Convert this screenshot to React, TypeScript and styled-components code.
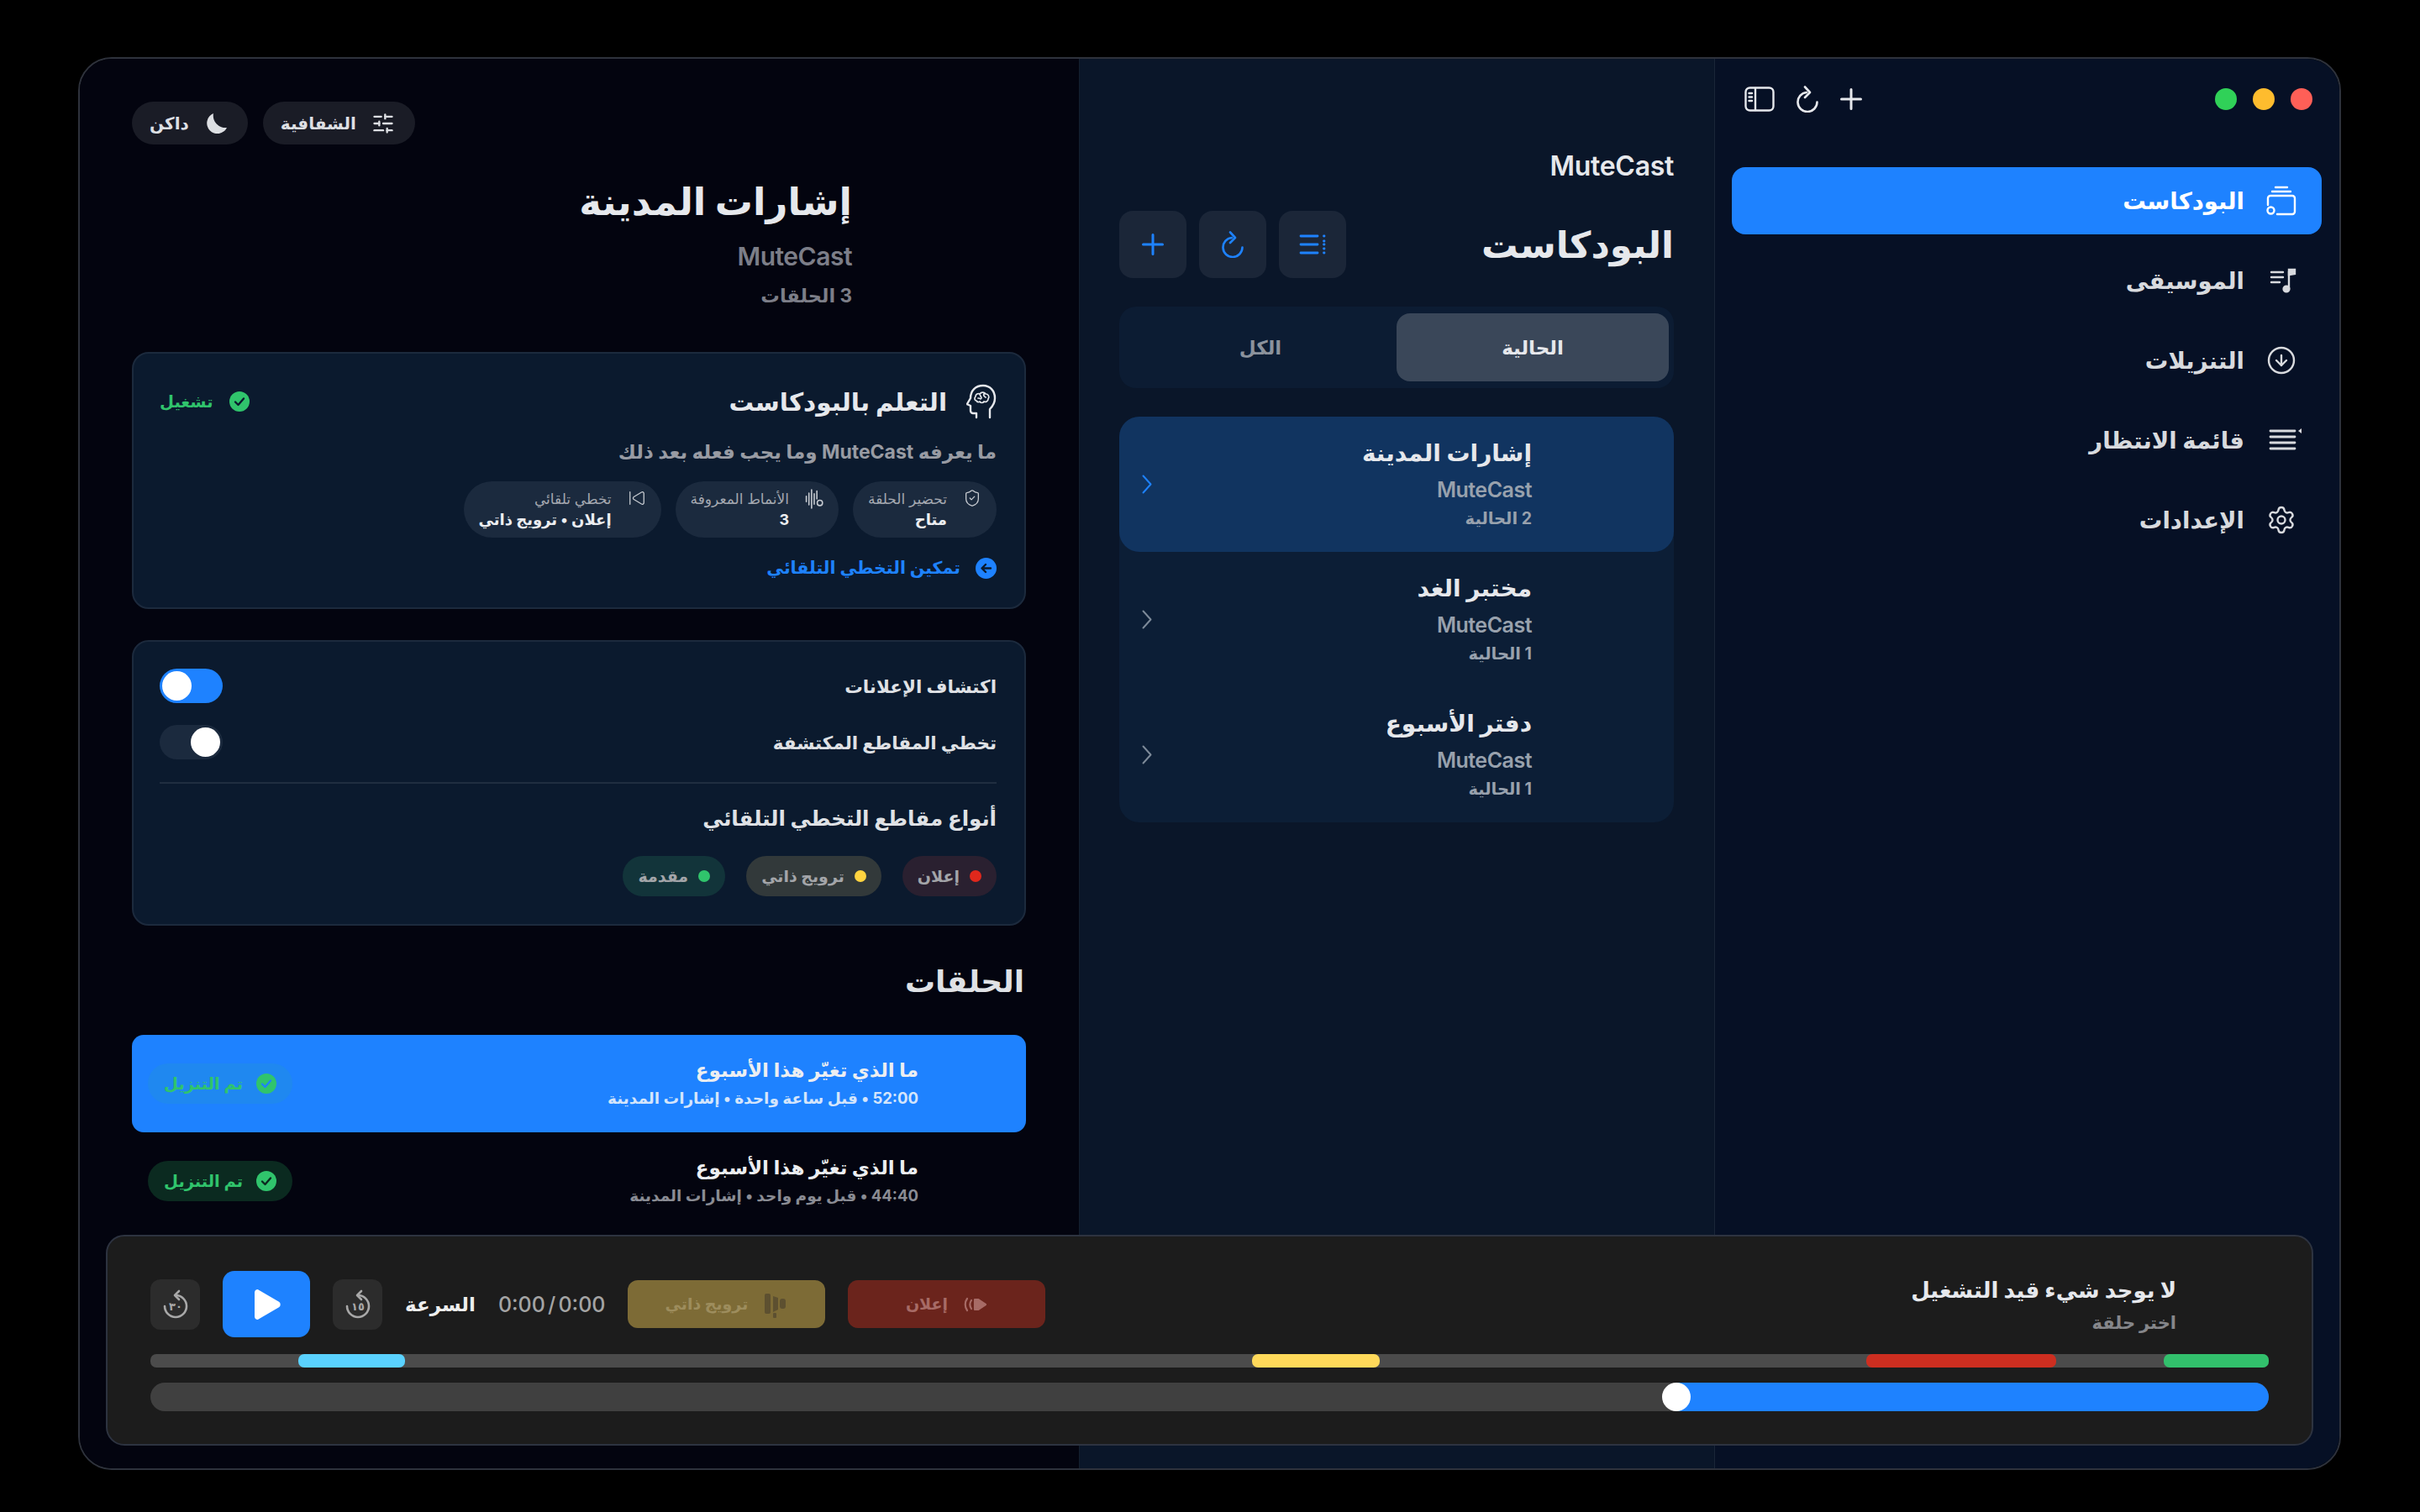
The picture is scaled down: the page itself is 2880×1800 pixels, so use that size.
import React from 'react';
import styled, { createGlobalStyle } from 'styled-components';
import {
  CircleArrowDown,
  Settings,
  ShieldCheck,
  SkipBack,
  SlidersHorizontal,
} from 'lucide-react';

const GlobalStyle = createGlobalStyle`
  * { box-sizing: border-box; }
  html, body { margin: 0; background: #000; }
  body { font-family: Inter, "DejaVu Sans", sans-serif; }
`;

/* icons */
const SidebarIcon = () => (
  <svg width="36" height="30" viewBox="0 0 36 30" fill="none" stroke="#e6e8ec" strokeWidth="2.4" strokeLinecap="round">
    <rect x="1.5" y="1.5" width="33" height="27" rx="5" />
    <path d="M13 2v26M5.5 8h3.5M5.5 12.5h3.5M5.5 17h3.5" />
  </svg>
);

const RefreshIcon = ({ color = '#e6e8ec' }: { color?: string }) => (
  <svg width="28" height="32" viewBox="0 0 28 32" fill="none" stroke={color} strokeWidth="2.6" strokeLinecap="round" strokeLinejoin="round">
    <path d="M13 8A11.5 11.5 0 1 0 25.500 19.500" />
    <path d="M11 1.500l6 6.500-6 6" />
  </svg>
);

const PlusIcon = ({ color }: { color: string }) => (
  <svg width="26" height="26" viewBox="0 0 26 26" fill="none" stroke={color} strokeWidth="3" strokeLinecap="round">
    <path d="M13 1.500v23M1.500 13h23" />
  </svg>
);

const PodcastIcon = () => (
  <svg width="38" height="36" viewBox="0 0 38 36" fill="none" stroke="currentColor" strokeWidth="2.4" strokeLinecap="round">
    <path d="M13 2h14M9 7h22" />
    <path d="M4 23V15a3 3 0 0 1 3-3h26a3 3 0 0 1 3 3v16a3 3 0 0 1-3 3H15" />
    <circle cx="7.500" cy="29.500" r="4" />
  </svg>
);

const MusicIcon = () => (
  <svg width="32" height="32" viewBox="0 0 32 32" fill="none" stroke="currentColor" strokeWidth="2.4" strokeLinecap="round">
    <path d="M2 6h14M2 12h14M2 18h10" />
    <path d="M23 5v21" />
    <path d="M23 3h7v5l-7 1z" fill="currentColor" />
    <circle cx="20" cy="26" r="3.400" fill="currentColor" />
  </svg>
);

const QueueIcon = () => (
  <QueueSvg width="34" height="30" viewBox="0 0 34 30" fill="none" stroke="currentColor" strokeWidth="2.800" strokeLinecap="round">
    <path d="M3 4h29M3 11h29M3 18h29M3 25h29" />
    <path d="M40 1v6l-4-3z" fill="currentColor" stroke="none" />
  </QueueSvg>
);

const ListIcon = () => (
  <svg width="32" height="30" viewBox="0 0 32 30" fill="none" stroke="#1e82ff" strokeWidth="2.800" strokeLinecap="round">
    <path d="M2 5h20M2 15h20M2 25h20" />
    <path d="M29.500 5h.5M29.500 11h.5M29.500 15h.5M29.500 20h.5M29.500 25h.5" />
  </svg>
);

const Chevron = ({ color }: { color: string }) => (
  <svg width="12" height="23" viewBox="0 0 12 23" fill="none" stroke={color} strokeWidth="2" strokeLinecap="round" strokeLinejoin="round">
    <path d="M1.500 1.500l9 10-9 10" />
  </svg>
);

const BrainHeadIcon = () => (
  <svg width="36" height="42" viewBox="0 0 36 42" fill="none" stroke="#e6e8ec" strokeWidth="2.400" strokeLinecap="round" strokeLinejoin="round">
    <path d="M12 40v-5H8a3 3 0 0 1-3-3v-6L1.500 24.500c-.5-.3-.5-1 0-1.500L5 17C5 8 11 2 20 2c8 0 14 6 14 15 0 6-3 10-6 13v10" />
    <path
      strokeWidth="1.700"
      d="M12 20c-2 0-3-3-1-5 0-3 3-4 5-3 2-3 6-2 7 0 3 0 5 3 3 6 0 3-3 4-5 3-1 2-4 2-5 0-1 1-3 1-4-1zM16 12c0 2 2 3 2 5M21 12c-1 2 0 3 2 4M14 17c1 0 2 0 3 1"
    />
  </svg>
);

const CheckCircle = ({ size = 24, tick = '#0b1a2e' }: { size?: number; tick?: string }) => (
  <svg width={size} height={size} viewBox="0 0 24 24">
    <circle cx="12" cy="12" r="12" fill="#30c46c" />
    <path d="M7 12.500l3.500 3.500L17 8.500" fill="none" stroke={tick} strokeWidth="2.400" strokeLinecap="round" strokeLinejoin="round" />
  </svg>
);

const ArrowCircle = () => (
  <svg width="25" height="25" viewBox="0 0 25 25">
    <circle cx="12.500" cy="12.500" r="12.500" fill="#1e82ff" />
    <path d="M18 12.500H8M12 8l-4.500 4.500L12 17" fill="none" stroke="#0b1a2e" strokeWidth="2.400" strokeLinecap="round" strokeLinejoin="round" />
  </svg>
);

const MoonIcon = () => (
  <svg width="28" height="28" viewBox="0 0 28 28" fill="currentColor">
    <path d="M11 2A12.500 12.500 0 1 0 27 19 14.500 14.500 0 0 1 11 2z" />
  </svg>
);

const WaveBadgeIcon = () => (
  <svg width="28" height="34" viewBox="0 0 28 34" fill="none" stroke="#c8ccd2" strokeWidth="2" strokeLinecap="round">
    <path d="M2 13v8M6 8v18M10 3v28M14 9v16M18 5v12" />
    <circle cx="22.500" cy="23" r="4" />
  </svg>
);

const GoIcon = ({ label }: { label: string }) => (
  <svg width="32" height="40" viewBox="0 0 32 40" fill="none" stroke="#a8a8a8" strokeWidth="2.600" strokeLinecap="round" strokeLinejoin="round">
    <path d="M16 9A13 13 0 1 1 3 22" />
    <path d="M20 4l-5 5 5 5" />
    <text x="16" y="27" fontSize="13" fontWeight="700" fill="#a8a8a8" stroke="none" textAnchor="middle" fontFamily="DejaVu Sans, sans-serif">{label}</text>
  </svg>
);

const PlayIcon = () => (
  <svg width="36" height="38" viewBox="0 0 36 38">
    <path d="M5 4.500c0-2 2-3 3.500-2l24 14c1.600 1 1.600 4 0 5l-24 14c-1.500 1-3.500 0-3.500-2z" fill="#fff" stroke="#fff" strokeWidth="2" strokeLinejoin="round" />
  </svg>
);

const AdIcon = ({ color }: { color: string }) => (
  <svg width="30" height="30" viewBox="0 0 30 30" fill="none" stroke={color} strokeWidth="2.200" strokeLinecap="round">
    <path d="M5 8c-3 4-3 10 0 14M10 10c-2 3-2 7 0 10" />
    <path d="M14 9h4l9 6-9 6h-4z" fill={color} stroke={color} strokeLinejoin="round" />
  </svg>
);

const PromoIcon = ({ color }: { color: string }) => (
  <svg width="30" height="32" viewBox="0 0 30 32" fill={color}>
    <rect x="2" y="3" width="7" height="24" rx="2" />
    <path d="M12 6l6 2v14l-6 3z" />
    <rect x="20" y="9" width="7" height="12" rx="3" />
    <rect x="12" y="26" width="4" height="6" rx="1" />
  </svg>
);

const QueueSvg = styled.svg`
  overflow: visible;
`;

/* layout */
const Page = styled.div`
  width: 2880px;
  height: 1800px;
  padding: 68px 94px 50px 93px;
  background: #000;
  display: flex;
`;

const Window = styled.div`
  position: relative;
  flex: 1;
  display: flex;
  border: 2px solid #2e323c;
  border-radius: 40px;
  overflow: hidden;
  color: #e6e8ec;
`;

/* sidebar */
const Sidebar = styled.aside`
  width: 744px;
  flex: none;
  padding: 34px 21px 0 20px;
  background: #061025;
  border-left: 1px solid #1a2638;
`;

const TitleBar = styled.div`
  height: 28px;
  padding: 0 11px 0 15px;
  display: flex;
  align-items: center;
  justify-content: space-between;
`;

const Lights = styled.div`
  display: flex;
  gap: 19px;
`;

const Light = styled.span<{ $color: string }>`
  width: 26px;
  height: 26px;
  border-radius: 50%;
  background: ${p => p.$color};
`;

const TitleTools = styled.div`
  display: flex;
  align-items: center;
  gap: 25px;
`;

const Nav = styled.nav`
  margin-top: 67px;
  display: flex;
  flex-direction: column;
  gap: 15px;
`;

const NavItem = styled.div<{ $active?: boolean }>`
  height: 80px;
  padding-right: 30px;
  display: flex;
  align-items: center;
  border-radius: 16px;
  background: ${p => (p.$active ? '#1e82ff' : 'transparent')};
  color: ${p => (p.$active ? '#fff' : '#d8dade')};
`;

const NavIcon = styled.span`
  width: 42px;
  display: flex;
  justify-content: flex-start;
  margin-left: 20px;
`;

const NavLabel = styled.span`
  font-size: 27.500px;
  font-weight: 700;
`;

/* podcast list */
const Middle = styled.section`
  width: 756px;
  flex: none;
  padding: 108px 48px 0 47px;
  background: #0a1629;
  border-left: 1px solid #14202f;
`;

const Brand = styled.div`
  height: 40px;
  font-size: 32px;
  font-weight: 600;
  line-height: 40px;
  letter-spacing: -0.3px;
  color: #e6e8ec;
`;

const ListHeader = styled.div`
  margin-top: 33px;
  display: flex;
  align-items: center;
  justify-content: space-between;
`;

const ListTitle = styled.h1`
  margin: 0;
  font-size: 43.500px;
  font-weight: 700;
`;

const HeaderButtons = styled.div`
  display: flex;
  gap: 15px;
`;

const IconButton = styled.div`
  width: 80px;
  height: 80px;
  border-radius: 16px;
  background: #1b2638;
  color: #1e82ff;
  display: flex;
  align-items: center;
  justify-content: center;
`;

const Segmented = styled.div`
  margin-top: 34px;
  height: 97px;
  padding: 8px 6px;
  border-radius: 20px;
  background: #0c1c33;
  display: grid;
  grid-template-columns: 1fr 1fr;
`;

const Segment = styled.div<{ $active?: boolean }>`
  border-radius: 16px;
  background: ${p => (p.$active ? '#3a4759' : 'transparent')};
  color: ${p => (p.$active ? '#e6e8ec' : '#8b929c')};
  font-size: 23px;
  font-weight: 700;
  display: flex;
  align-items: center;
  justify-content: center;
`;

const ShowList = styled.div`
  margin-top: 34px;
  border-radius: 24px;
  background: #0c1e36;
`;

const ShowRow = styled.div<{ $active?: boolean }>`
  height: 161px;
  padding: 0 169px 0 27px;
  border-radius: 24px;
  background: ${p => (p.$active ? '#113460' : 'transparent')};
  display: flex;
  justify-content: space-between;
  align-items: center;
`;

const ShowText = styled.div`
  align-self: flex-start;
  padding-top: 23px;
`;

const ShowTitle = styled.div`
  font-size: 28px;
  font-weight: 700;
  line-height: 40px;
  color: #e6e8ec;
`;

const ShowAuthor = styled.div`
  margin-top: 9px;
  font-size: 25px;
  font-weight: 600;
  line-height: 30px;
  letter-spacing: -0.5px;
  color: #98a1ad;
`;

const ShowCount = styled.div`
  margin-top: 5px;
  font-size: 19.500px;
  font-weight: 700;
  line-height: 28px;
  color: #98a1ad;
`;

/* detail */
const Detail = styled.main`
  flex: 1;
  min-width: 0;
  padding: 51px 63px 0 62px;
  background: #03040f;
  overflow: hidden;
`;

const TopPills = styled.div`
  display: flex;
  justify-content: flex-end;
  gap: 18px;
`;

const TopPill = styled.div`
  height: 51px;
  padding: 0 24px 0 21px;
  border-radius: 26px;
  background: #1a1c26;
  color: #dddfe3;
  display: flex;
  align-items: center;
  gap: 18px;
  font-size: 20px;
  font-weight: 700;
`;

const DetailHeader = styled.header`
  margin-top: 36px;
  padding-right: 207px;
`;

const DetailTitle = styled.h2`
  margin: 0;
  font-size: 45px;
  font-weight: 700;
  line-height: 64px;
  color: #e6e8ec;
`;

const DetailAuthor = styled.div`
  margin-top: 15px;
  font-size: 30px;
  font-weight: 600;
  line-height: 36px;
  letter-spacing: -0.5px;
  color: #7c7e88;
`;

const DetailCount = styled.div`
  margin-top: 13px;
  font-size: 22.500px;
  font-weight: 700;
  line-height: 32px;
  color: #7c7e88;
`;

const Card = styled.div<{ $top: number; $bottom: number }>`
  margin-top: ${p => p.$top}px;
  padding: 36px 33px ${p => p.$bottom}px 31px;
  border: 2px solid #1c2a3d;
  border-radius: 20px;
  background: #0b1a2e;
`;

const LearnHead = styled.div`
  height: 42px;
  display: flex;
  align-items: center;
  justify-content: space-between;
`;

const LearnTitle = styled.div`
  display: flex;
  align-items: center;
  gap: 23px;
  font-size: 29.500px;
  font-weight: 700;
  color: #e6e8ec;
`;

const StatusOn = styled.div`
  display: flex;
  align-items: center;
  gap: 19px;
  font-size: 19.500px;
  font-weight: 700;
  color: #30c46c;
`;

const LearnDesc = styled.div`
  margin-top: 21px;
  font-size: 23px;
  font-weight: 700;
  line-height: 36px;
  color: #989ba3;
`;

const StatChips = styled.div`
  margin-top: 17px;
  display: flex;
  gap: 17px;
`;

const StatChip = styled.div`
  height: 67px;
  padding: 0 18px;
  border-radius: 34px;
  background: #1b2a3e;
  display: flex;
  align-items: flex-start;
  gap: 19px;
`;

const StatIcon = styled.span`
  width: 22px;
  margin-top: 4px;
  display: flex;
  justify-content: center;
  color: #c8ccd2;
`;

const StatText = styled.div`
  display: flex;
  flex-direction: column;
`;

const StatLabel = styled.span`
  margin-top: 9px;
  font-size: 17px;
  font-weight: 400;
  line-height: 24px;
  color: #a4a8b0;
`;

const StatValue = styled.span`
  font-size: 18px;
  font-weight: 700;
  line-height: 26px;
  color: #eceef1;
`;

const EnableLink = styled.div`
  margin-top: 20px;
  display: flex;
  align-items: center;
  gap: 18px;
  font-size: 20.500px;
  font-weight: 700;
  line-height: 32px;
  color: #1e82ff;
`;

const ToggleRow = styled.div<{ $top: number }>`
  margin-top: ${p => p.$top}px;
  height: 41px;
  display: flex;
  align-items: center;
  justify-content: space-between;
  font-size: 21.500px;
  font-weight: 700;
  color: #dfe1e5;
`;

const Toggle = styled.div<{ $on: boolean }>`
  position: relative;
  width: 75px;
  height: 41px;
  border-radius: 21px;
  background: ${p => (p.$on ? '#1e82ff' : '#1b2a3e')};
`;

const Knob = styled.span<{ $on: boolean }>`
  position: absolute;
  top: 3px;
  width: 35px;
  height: 35px;
  border-radius: 50%;
  background: #fff;
  ${p => (p.$on ? 'left: 3px;' : 'right: 3px;')}
`;

const Divider = styled.hr`
  margin: 27px 0 0;
  border: 0;
  height: 2px;
  background: #202e40;
`;

const TypesTitle = styled.div`
  margin-top: 21px;
  font-size: 24.500px;
  font-weight: 700;
  line-height: 40px;
  color: #dfe1e5;
`;

const TypeChips = styled.div`
  margin-top: 25px;
  display: flex;
  gap: 25px;
`;

const TypeChip = styled.div<{ $bg: string }>`
  height: 48px;
  padding: 0 18px;
  border-radius: 24px;
  background: ${p => p.$bg};
  color: #a3a5a9;
  display: flex;
  align-items: center;
  gap: 12px;
  font-size: 19px;
  font-weight: 700;
`;

const Dot = styled.span<{ $color: string }>`
  width: 14px;
  height: 14px;
  border-radius: 50%;
  background: ${p => p.$color};
`;

const SectionTitle = styled.h3`
  margin: 40px 2px 0 0;
  font-size: 36px;
  font-weight: 700;
  line-height: 52px;
  color: #dfe1e5;
`;

const Episodes = styled.div`
  margin-top: 38px;
`;

const Episode = styled.div<{ $active?: boolean }>`
  height: 116px;
  padding: 0 128px 0 19px;
  border-radius: 14px;
  background: ${p => (p.$active ? '#1e82ff' : 'transparent')};
  display: flex;
  align-items: center;
  justify-content: space-between;
`;

const EpisodeTitle = styled.div`
  font-size: 23px;
  font-weight: 700;
  line-height: 34px;
  color: #eceef1;
`;

const EpisodeMeta = styled.div<{ $active?: boolean }>`
  font-size: 18.500px;
  font-weight: 700;
  line-height: 32px;
  color: ${p => (p.$active ? '#d4e5fb' : '#8a8c94')};
`;

const DownloadedPill = styled.div<{ $active?: boolean }>`
  height: 48px;
  width: 172px;
  border-radius: 24px;
  background: ${p => (p.$active ? 'rgba(48, 196, 108, 0.1)' : '#0b2a20')};
  color: #30c46c;
  display: flex;
  align-items: center;
  justify-content: center;
  gap: 16px;
  font-size: 19.500px;
  font-weight: 700;
`;

/* player */
const Player = styled.footer`
  position: absolute;
  left: 31px;
  right: 31px;
  bottom: 27px;
  height: 251px;
  padding: 41px 51px 0;
  border: 2px solid #2d3340;
  border-radius: 22px;
  background: #1c1c1c;
`;

const PlayerTop = styled.div`
  height: 79px;
  display: flex;
  align-items: center;
  justify-content: space-between;
`;

const NowPlaying = styled.div`
  margin-right: 110px;
`;

const NowTitle = styled.div`
  font-size: 26px;
  font-weight: 700;
  line-height: 40px;
  color: #e6e8ec;
`;

const NowSub = styled.div`
  margin-top: 4px;
  font-size: 21px;
  font-weight: 700;
  line-height: 30px;
  color: #85868a;
`;

const Controls = styled.div`
  display: flex;
  align-items: center;
  gap: 27px;
`;

const SkipButton = styled.div<{ $bg: string; $color: string }>`
  width: 235px;
  height: 57px;
  border-radius: 12px;
  background: ${p => p.$bg};
  color: ${p => p.$color};
  display: flex;
  align-items: center;
  justify-content: center;
  gap: 18px;
  font-size: 19px;
  font-weight: 700;
`;

const TimeLabel = styled.div`
  font-size: 25px;
  font-weight: 500;
  word-spacing: -3.500px;
  color: #a4a4a4;
  direction: ltr;
`;

const SpeedLabel = styled.div`
  font-size: 23px;
  font-weight: 700;
  color: #eeeeee;
`;

const JumpButton = styled.div`
  width: 59px;
  height: 60px;
  border-radius: 12px;
  background: #2c2c2c;
  display: flex;
  align-items: center;
  justify-content: center;
`;

const PlayButton = styled.div`
  width: 104px;
  height: 79px;
  border-radius: 14px;
  background: #1e82ff;
  display: flex;
  align-items: center;
  justify-content: center;
`;

const Timeline = styled.div`
  position: relative;
  margin-top: 20px;
  height: 16px;
  border-radius: 7px;
  background: #4b4b4b;
`;

const Segm = styled.span<{ $left: number; $width: number; $color: string }>`
  position: absolute;
  top: 0;
  bottom: 0;
  left: ${p => p.$left}px;
  width: ${p => p.$width}px;
  border-radius: 7px;
  background: ${p => p.$color};
`;

const Slider = styled.div`
  position: relative;
  margin-top: 18px;
  height: 34px;
  border-radius: 17px;
  background: #404040;
  overflow: hidden;
`;

const SliderFill = styled.span`
  position: absolute;
  top: 0;
  bottom: 0;
  right: 0;
  width: 705px;
  background: #1e82ff;
`;

const SliderKnob = styled.span`
  position: absolute;
  top: 0;
  right: 688px;
  width: 34px;
  height: 34px;
  border-radius: 50%;
  background: #fff;
`;

const shows = [
  { title: 'إشارات المدينة', count: '2 الحالية', active: true },
  { title: 'مختبر الغد', count: '1 الحالية' },
  { title: 'دفتر الأسبوع', count: '1 الحالية' },
];

const navItems = [
  { label: 'البودكاست', icon: <PodcastIcon />, active: true },
  { label: 'الموسيقى', icon: <MusicIcon /> },
  { label: 'التنزيلات', icon: <CircleArrowDown size={36} strokeWidth={1.6} /> },
  { label: 'قائمة الانتظار', icon: <QueueIcon /> },
  { label: 'الإعدادات', icon: <Settings size={36} strokeWidth={1.6} /> },
];

const episodes = [
  { meta: '52:00 • قبل ساعة واحدة • إشارات المدينة', active: true },
  { meta: '44:40 • قبل يوم واحد • إشارات المدينة' },
];

export default function App() {
  return (
    <Page dir="rtl">
      <GlobalStyle />
      <Window>
        <Sidebar>
          <TitleBar>
            <Lights>
              <Light $color="#ff5f57" />
              <Light $color="#febc2e" />
              <Light $color="#30d158" />
            </Lights>
            <TitleTools>
              <PlusIcon color="#e6e8ec" />
              <RefreshIcon />
              <SidebarIcon />
            </TitleTools>
          </TitleBar>
          <Nav>
            {navItems.map(item => (
              <NavItem key={item.label} $active={item.active}>
                <NavIcon>{item.icon}</NavIcon>
                <NavLabel>{item.label}</NavLabel>
              </NavItem>
            ))}
          </Nav>
        </Sidebar>

        <Middle>
          <Brand>MuteCast</Brand>
          <ListHeader>
            <ListTitle>البودكاست</ListTitle>
            <HeaderButtons>
              <IconButton><ListIcon /></IconButton>
              <IconButton><RefreshIcon color="#1e82ff" /></IconButton>
              <IconButton><PlusIcon color="#1e82ff" /></IconButton>
            </HeaderButtons>
          </ListHeader>
          <Segmented>
            <Segment $active>الحالية</Segment>
            <Segment>الكل</Segment>
          </Segmented>
          <ShowList>
            {shows.map(show => (
              <ShowRow key={show.title} $active={show.active}>
                <ShowText>
                  <ShowTitle>{show.title}</ShowTitle>
                  <ShowAuthor>MuteCast</ShowAuthor>
                  <ShowCount>{show.count}</ShowCount>
                </ShowText>
                <Chevron color={show.active ? '#1e82ff' : '#7d8a99'} />
              </ShowRow>
            ))}
          </ShowList>
        </Middle>

        <Detail>
          <TopPills>
            <TopPill><SlidersHorizontal size={28} />الشفافية</TopPill>
            <TopPill><MoonIcon />داكن</TopPill>
          </TopPills>
          <DetailHeader>
            <DetailTitle>إشارات المدينة</DetailTitle>
            <DetailAuthor>MuteCast</DetailAuthor>
            <DetailCount>3 الحلقات</DetailCount>
          </DetailHeader>

          <Card $top={51} $bottom={31}>
            <LearnHead>
              <LearnTitle><BrainHeadIcon />التعلم بالبودكاست</LearnTitle>
              <StatusOn><CheckCircle />تشغيل</StatusOn>
            </LearnHead>
            <LearnDesc>ما يعرفه MuteCast وما يجب فعله بعد ذلك</LearnDesc>
            <StatChips>
              <StatChip>
                <StatIcon><ShieldCheck size={32} strokeWidth={1.4} /></StatIcon>
                <StatText><StatLabel>تحضير الحلقة</StatLabel><StatValue>متاح</StatValue></StatText>
              </StatChip>
              <StatChip>
                <StatIcon><WaveBadgeIcon /></StatIcon>
                <StatText><StatLabel>الأنماط المعروفة</StatLabel><StatValue>3</StatValue></StatText>
              </StatChip>
              <StatChip>
                <StatIcon><SkipBack size={32} strokeWidth={1.4} /></StatIcon>
                <StatText><StatLabel>تخطي تلقائي</StatLabel><StatValue>إعلان • ترويج ذاتي</StatValue></StatText>
              </StatChip>
            </StatChips>
            <EnableLink><ArrowCircle />تمكين التخطي التلقائي</EnableLink>
          </Card>

          <Card $top={37} $bottom={33}>
            <ToggleRow $top={-4}>اكتشاف الإعلانات<Toggle $on><Knob $on /></Toggle></ToggleRow>
            <ToggleRow $top={26}>تخطي المقاطع المكتشفة<Toggle $on={false}><Knob $on={false} /></Toggle></ToggleRow>
            <Divider />
            <TypesTitle>أنواع مقاطع التخطي التلقائي</TypesTitle>
            <TypeChips>
              <TypeChip $bg="#2a2030"><Dot $color="#e0281c" />إعلان</TypeChip>
              <TypeChip $bg="#32393a"><Dot $color="#ffd440" />ترويج ذاتي</TypeChip>
              <TypeChip $bg="#12343a"><Dot $color="#30c46c" />مقدمة</TypeChip>
            </TypeChips>
          </Card>

          <SectionTitle>الحلقات</SectionTitle>
          <Episodes>
            {episodes.map(ep => (
              <Episode key={ep.meta} $active={ep.active}>
                <div>
                  <EpisodeTitle>ما الذي تغيّر هذا الأسبوع</EpisodeTitle>
                  <EpisodeMeta $active={ep.active}>{ep.meta}</EpisodeMeta>
                </div>
                <DownloadedPill $active={ep.active}>
                  <CheckCircle tick={ep.active ? '#1e82ff' : '#0b2a20'} />تم التنزيل
                </DownloadedPill>
              </Episode>
            ))}
          </Episodes>
        </Detail>

        <Player>
          <PlayerTop>
            <NowPlaying>
              <NowTitle>لا يوجد شيء قيد التشغيل</NowTitle>
              <NowSub>اختر حلقة</NowSub>
            </NowPlaying>
            <Controls>
              <SkipButton $bg="#6b241c" $color="#a76b66"><AdIcon color="#a76b66" />إعلان</SkipButton>
              <SkipButton $bg="#7d6b36" $color="#9d8d5d"><PromoIcon color="#5d5030" />ترويج ذاتي</SkipButton>
              <TimeLabel>0:00 / 0:00</TimeLabel>
              <SpeedLabel>السرعة</SpeedLabel>
              <JumpButton><GoIcon label="١٥" /></JumpButton>
              <PlayButton><PlayIcon /></PlayButton>
              <JumpButton><GoIcon label="٣٠" /></JumpButton>
            </Controls>
          </PlayerTop>
          <Timeline>
            <Segm $left={176} $width={127} $color="#5ad2ff" />
            <Segm $left={1311} $width={152} $color="#ffd95a" />
            <Segm $left={2042} $width={226} $color="#cd2e20" />
            <Segm $left={2396} $width={125} $color="#32c06c" />
          </Timeline>
          <Slider>
            <SliderFill />
            <SliderKnob />
          </Slider>
        </Player>
      </Window>
    </Page>
  );
}
